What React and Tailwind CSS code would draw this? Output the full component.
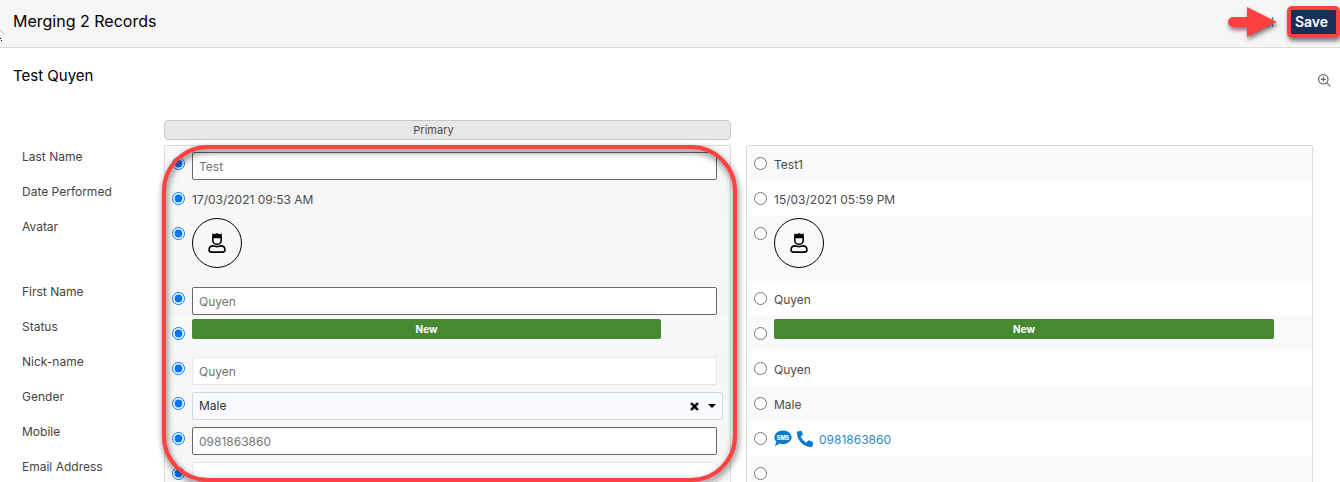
import { FaPhoneAlt, FaTimes } from "react-icons/fa";

const fields = [
  { id: "lastName", label: "Last Name", kind: "text", value: "Test", other: "Test1" },
  { id: "datePerformed", label: "Date Performed", kind: "plain", value: "17/03/2021 09:53 AM", other: "15/03/2021 05:59 PM" },
  { id: "avatar", label: "Avatar", kind: "avatar" },
  { id: "firstName", label: "First Name", kind: "text", value: "Quyen", other: "Quyen" },
  { id: "status", label: "Status", kind: "status", value: "New", other: "New" },
  { id: "nickName", label: "Nick-name", kind: "soft", value: "Quyen", other: "Quyen" },
  { id: "gender", label: "Gender", kind: "select", value: "Male", other: "Male" },
  { id: "mobile", label: "Mobile", kind: "text", value: "0981863860", other: "0981863860" },
  { id: "email", label: "Email Address", kind: "soft", value: "", other: "" },
];

const rowHeight = (kind) => (kind === "avatar" ? "h-[65px]" : "h-[35px]");

function Avatar() {
  return (
    <div className="mt-[2px] flex size-[50px] items-center justify-center rounded-full border border-black">
      <svg viewBox="0 0 18 20" className="h-5 w-[18px]" fill="none" stroke="black" strokeWidth="1.6" role="img" aria-label="Avatar">
        <path d="M4.8 3v4.200a4.200 4.200 0 0 0 8.400 0V3" />
        <path d="M4.300.2l2.200 1L9 0l2.500 1.200 2.200-1V5.200H4.300Z" fill="black" stroke="none" />
        <path d="M3.600 19.100q-2.500 0-2.500-1.800v-.5c0-2.500 1.600-3.900 4-3.900 1.400 0 2.100.8 3.900.8s2.500-.8 3.900-.8c2.400 0 4 1.400 4 3.900v.5q0 1.800-2.500 1.800Z" strokeLinejoin="round" />
      </svg>
    </div>
  );
}

function StatusBar({ children }) {
  return (
    <div className="mt-[3px] h-5 rounded-xs bg-[#468931] text-center text-[10px] leading-5 font-bold text-white">
      {children}
    </div>
  );
}

function PrimaryValue({ field }) {
  const { id, kind, value } = field;
  if (kind === "avatar") return <Avatar />;
  if (kind === "plain") return <span className="block pt-[11px]">{value}</span>;
  if (kind === "status")
    return (
      <div className="mr-14">
        <StatusBar>{value}</StatusBar>
      </div>
    );
  if (kind === "select")
    return (
      <div className="relative mt-[6px] -mr-[6px]">
        <select
          id={id}
          defaultValue={value}
          className="block h-7 w-full appearance-none rounded-xs border border-[#cfd7df] bg-[#f8faff] px-[6px] text-[12px] text-[#333]"
        >
          <option>Male</option>
          <option>Female</option>
        </select>
        <button type="button" aria-label="Clear gender" className="absolute top-2 right-[22px] p-px text-black">
          <FaTimes size={11} stroke="black" strokeWidth={30} />
        </button>
        <svg viewBox="0 0 8 4" className="pointer-events-none absolute top-3 right-[7px] h-1 w-2">
          <path d="M0 0h8L4 4z" />
        </svg>
      </div>
    );
  return (
    <input
      id={id}
      type="text"
      defaultValue={value}
      className={`mt-[6px] block h-7 w-full rounded-xs border bg-white px-[6px] text-[12px] text-[#757575] ${
        kind === "soft" ? "border-[#e8e8e8]" : "border-[#686868]"
      }`}
    />
  );
}

function OtherValue({ field }) {
  const { kind, other } = field;
  if (kind === "avatar") return <Avatar />;
  if (kind === "status")
    return (
      <div className="mr-[25px]">
        <StatusBar>{other}</StatusBar>
      </div>
    );
  if (field.id === "mobile")
    return (
      <div className="flex pt-2 text-[#0679c8]">
        <button type="button" aria-label="Send SMS" className="h-[18px]">
          <svg viewBox="0 0 18 16" className="h-4 w-[18px]" fill="currentColor">
            <path d="M9 .5c4.800 0 8.600 3 8.600 6.800S13.800 14.100 9 14.100c-1.300 0-2.500-.2-3.600-.6C4.300 14.600 2.500 15.700.4 15.700c1-.9 1.900-2.400 2-3.900C1.100 10.700.4 9.100.4 7.300.4 3.500 4.200.5 9 .5Z" />
            <text x="9" y="9.500" fill="white" fontSize="5.500" fontWeight="800" textAnchor="middle">SMS</text>
          </svg>
        </button>
        <button type="button" aria-label="Call" className="ml-[5px] h-[18px]">
          <svg viewBox="0 0 512 512" className="size-[17px]" fill="currentColor">
            <path d="M123.600 24.300l-104 24C8.700 50.900 0 60.600 0 72.300 0 328.800 207.900 512 439.700 512c11.700 0 21.400-8.700 24-19.600l24-104c2.600-11.300-3.300-22.900-14-27.600l-112-48a24 24 0 0 0-28 6.900l-49.600 60.600A370.700 370.700 0 0 1 106.900 203.100l60.600-49.600a23.900 23.900 0 0 0 6.900-28l-48-112C121.700 2.900 134.800 21.700 123.600 24.300z" />
          </svg>
        </button>
        <a href="tel:0981863860" className="ml-[5px] pt-[3px] text-[#2b8acb]">{other}</a>
      </div>
    );
  return <span className="block pt-[11px]">{other}</span>;
}

function Choice({ field, column, checked, children, className }) {
  return (
    <div className={`flex pr-[13px] pl-[7px] ${rowHeight(field.kind)} ${className}`}>
      <input
        type="radio"
        name={field.id + "Choice"}
        defaultChecked={checked}
        aria-label={field.label + ", " + column}
        className="mt-[11px] mr-[7px] size-[13px] shrink-0 accent-[#0075ff]"
      />
      <div className="min-w-0 flex-1">{children}</div>
    </div>
  );
}

function PanelFrame({ children }) {
  return (
    <div className="rounded-xs border border-[#dcdcdc]">{children}</div>
  );
}

export default function App() {
  return (
    <div className="h-screen overflow-hidden bg-white font-['Inter',sans-serif] text-[12px] leading-4 text-[#4d4d4d]">
      <header className="relative flex h-12 items-center justify-between border-b border-[#dcdcdc] bg-[#f6f6f6] pl-[13px]">
        <svg viewBox="0 0 6 12" className="absolute top-[30px] left-0 h-3 w-[6px]" aria-hidden="true">
          <path d="M0 0l5 5H0z" fill="white" />
          <path d="M0 0l5 5" stroke="#bbb" />
          <path d="M0 8h1v1H0zM1 10h1v1H1z" fill="black" />
        </svg>
        <h1 className="pb-[5px] text-[16px] leading-6 text-black">Merging 2 Records</h1>
        <div className="flex items-center pb-[3px]">
          <div className="relative mr-[13px]">
            <button type="button" className="block text-[13px] leading-5 text-[#0679c8]">Cancel</button>
            <svg viewBox="0 0 56 40" className="absolute -top-2 -right-[3px] h-10 w-14 overflow-visible drop-shadow-[1px_3px_2px_rgba(0,0,0,0.5)]" aria-hidden="true">
              <path d="M12 13h14V3l30 15-30 15V23H12a5 5 0 0 1 0-10z" fill="#ff4141" />
            </svg>
          </div>
          <button
            type="button"
            className="h-8 w-[53px] rounded-[5px] border-4 border-[#ff4141] bg-[#1a2f58] pr-1 text-center text-[14px] leading-6 font-semibold text-white shadow-[1px_3px_4px_rgba(0,0,0,0.5)]"
          >
            Save
          </button>
        </div>
      </header>

      <main>
        <div className="flex items-center justify-between pt-4 pr-[9px] pl-[13px]">
          <h2 className="text-[15px] leading-6 text-black">Test Quyen</h2>
          <button type="button" aria-label="Zoom in" className="mt-2">
            <svg viewBox="0 0 14 14" className="size-[14px]" fill="none" stroke="#666" strokeWidth="1.200">
              <circle cx="6.300" cy="6.300" r="4.700" />
              <path d="M9.700 9.700l3.600 3.600M3.800 6.300h5M6.300 3.800v5" />
            </svg>
          </button>
        </div>

        <form className="flex pt-8 pr-[27px] pl-[22px]">
          <div className="w-[142px] shrink-0 pt-[26px] text-[#444]">
            {fields.map((f) => (
              <div key={f.id} className={`pt-[3px] ${rowHeight(f.kind)}`}>
                <label htmlFor={f.id}>{f.label}</label>
              </div>
            ))}
          </div>
          <div className="grid flex-1 grid-cols-2 gap-x-[15px]">
            <div className="relative">
              <div className="mb-[5px] h-5 rounded-sm border border-[#c8c8c8] bg-[#e8e8e8] pr-[28px] text-center text-[11px] leading-[18px]">
                Primary
              </div>
              <PanelFrame>
                {fields.map((f) => (
                  <Choice key={f.id} field={f} column="primary record" checked className="bg-[#f8f8f8] even:bg-[#f6f6f6]">
                    <PrimaryValue field={f} />
                  </Choice>
                ))}
              </PanelFrame>
              <div
                className="pointer-events-none absolute top-[25px] -right-[6px] -left-[2px] h-[337px] rounded-[46px] border-4 border-[#ff4141] drop-shadow-[1px_3px_3px_rgba(0,0,0,0.6)]"
                aria-hidden="true"
              />
            </div>
            <div className="pt-[25px]">
              <PanelFrame>
                {fields.map((f) => (
                  <Choice key={f.id} field={f} column="second record" className="bg-white odd:bg-[#f9f9f9]">
                    <OtherValue field={f} />
                  </Choice>
                ))}
              </PanelFrame>
            </div>
          </div>
        </form>
      </main>
    </div>
  );
}
